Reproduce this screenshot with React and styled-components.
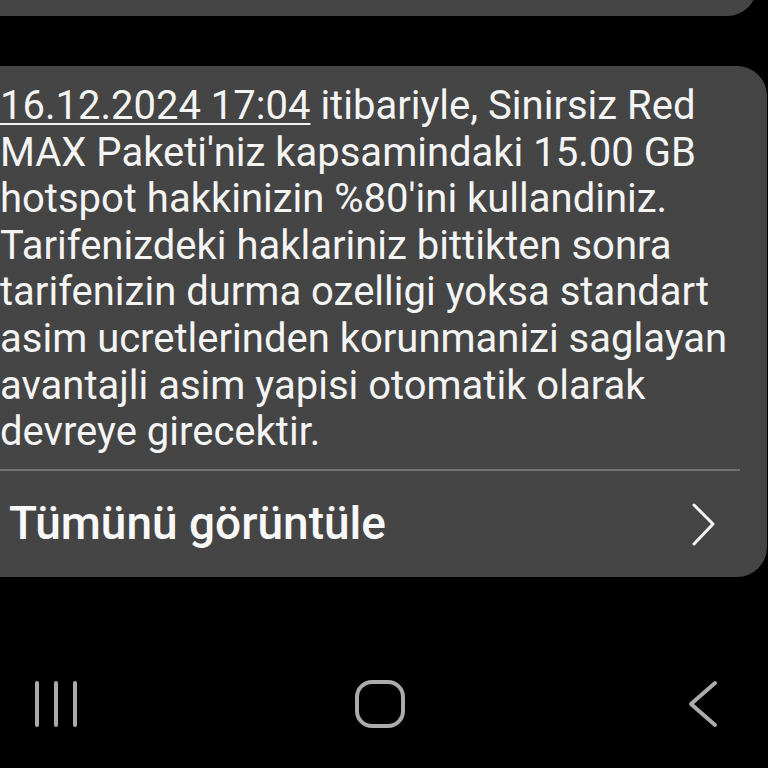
import React from 'react'
import styled, { createGlobalStyle } from 'styled-components'

const GlobalStyle = createGlobalStyle`
  html, body {
    margin: 0;
    padding: 0;
    background: #000;
  }
  body {
    font-family: Roboto, "Liberation Sans", sans-serif;
  }
`

const Screen = styled.div`
  width: 768px;
  height: 768px;
  overflow: hidden;
  background: #000;
  display: flex;
  flex-direction: column;
`

const PrevClip = styled.div`
  height: 16px;
  overflow: hidden;
  display: flex;
  align-items: flex-end;
  flex-shrink: 0;
`

const PrevBubble = styled.div`
  width: 757px;
  height: 80px;
  background: #454545;
  border-radius: 0 0 30px 0;
`

const Bubble = styled.div`
  margin-top: 50px;
  width: 767px;
  background: #454545;
  border-radius: 0 30px 30px 0;
  flex-shrink: 0;
`

const Body = styled.div`
  padding: 17px 0 13px 0;
  color: #f4f4f4;
  font-size: 40px;
  line-height: 46.6px;
  white-space: nowrap;
`

const Line = styled.div``

const DateLink = styled.span`
  text-decoration: underline;
  text-decoration-thickness: 2px;
  text-underline-offset: 4px;
`

const Divider = styled.div`
  height: 2px;
  margin-right: 27px;
  background: #727272;
`

const Footer = styled.div`
  height: 106px;
  display: flex;
  align-items: center;
  justify-content: space-between;
  padding: 0 48px 0 9px;
`

const FooterLabel = styled.span`
  color: #f8f8f8;
  font-size: 46px;
  font-weight: 500;
  margin-top: -2px;
`

const NavBar = styled.div`
  flex: 1;
  display: flex;
  align-items: center;
  justify-content: space-between;
  padding: 64px 35px 0 27px;
`

const NavIcon = styled.svg`
  width: 60px;
  height: 60px;
  display: block;
  stroke: #ababab;
  fill: none;
  stroke-width: 4;
  stroke-linecap: round;
  stroke-linejoin: round;
`

const lines = [
  'MAX Paketi\'niz kapsamindaki 15.00 GB',
  'hotspot hakkinizin %80\'ini kullandiniz.',
  'Tarifenizdeki haklariniz bittikten sonra',
  'tarifenizin durma ozelligi yoksa standart',
  'asim ucretlerinden korunmanizi saglayan',
  'avantajli asim yapisi otomatik olarak',
  'devreye girecektir.',
]

function Chevron () {
  return (
    <svg width="30" height="50" viewBox="0 0 30 50" fill="none">
      <path d="M5 6 L24 25 L5 45" stroke="#f4f4f4" strokeWidth="3"
            strokeLinecap="round" strokeLinejoin="round"/>
    </svg>
  )
}

function MessageBubble () {
  return (
    <Bubble>
      <Body>
        <Line><DateLink>16.12.2024 17:04</DateLink> itibariyle, Sinirsiz Red</Line>
        {lines.map((text, i) => <Line key={i}>{text}</Line>)}
      </Body>
      <Divider/>
      <Footer>
        <FooterLabel>Tümünü görüntüle</FooterLabel>
        <Chevron/>
      </Footer>
    </Bubble>
  )
}

function Navigation () {
  return (
    <NavBar>
      <NavIcon viewBox="0 0 60 60">
        <path d="M10 9 V51 M29 9 V51 M48 9 V51"/>
      </NavIcon>
      <NavIcon viewBox="0 0 60 60">
        <rect x="7" y="8" width="46" height="44" rx="15"/>
      </NavIcon>
      <NavIcon viewBox="0 0 60 60">
        <path d="M42 9 L18 30 L42 51"/>
      </NavIcon>
    </NavBar>
  )
}

export default function App () {
  return (
    <>
      <GlobalStyle/>
      <Screen>
        <PrevClip>
          <PrevBubble/>
        </PrevClip>
        <MessageBubble/>
        <Navigation/>
      </Screen>
    </>
  )
}
